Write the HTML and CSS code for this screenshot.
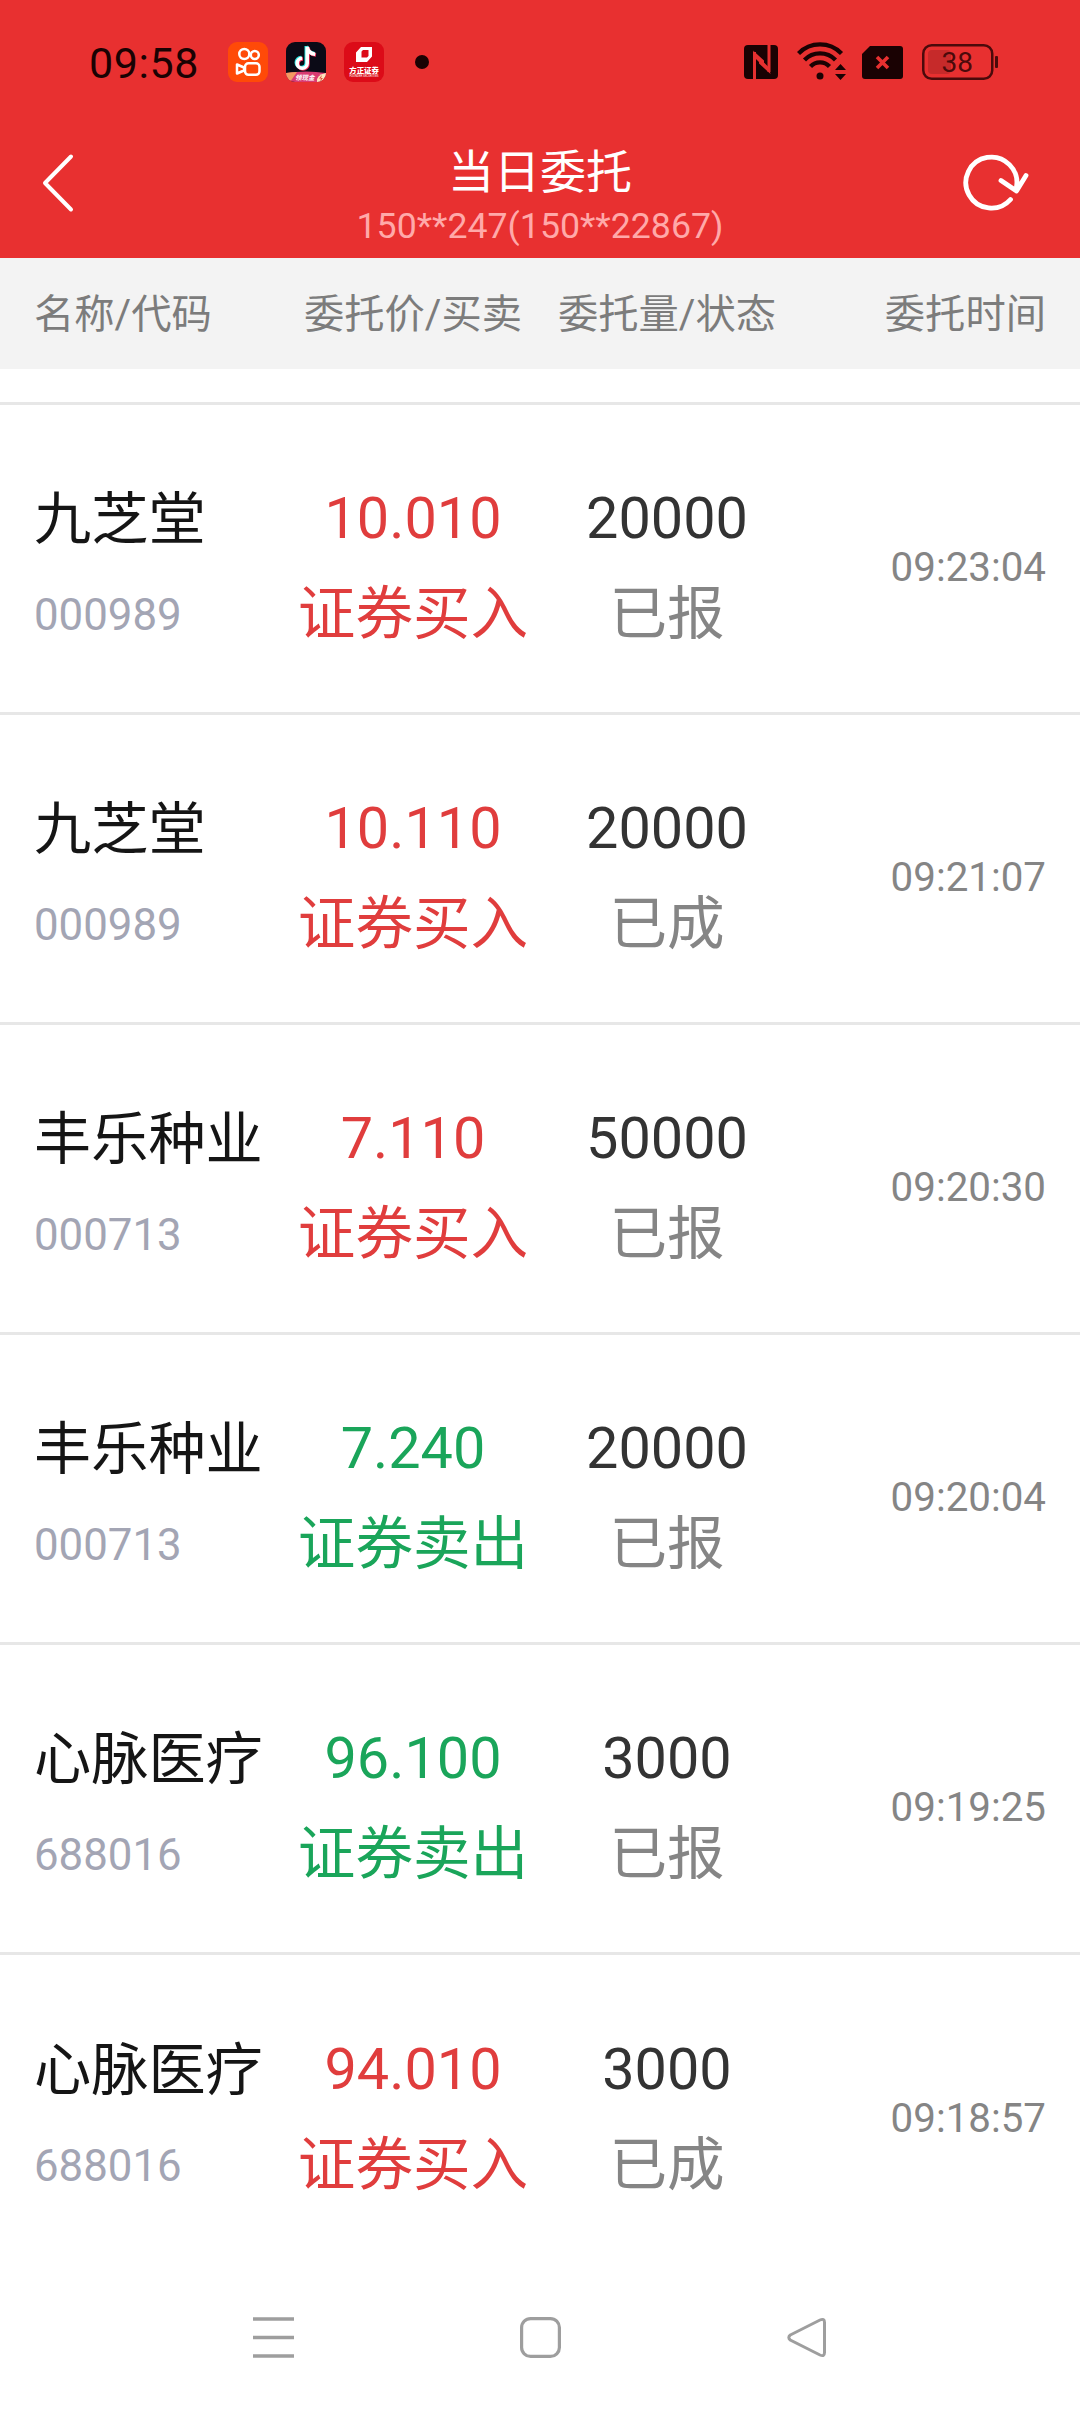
FILE: index.html
```html
<!DOCTYPE html>
<html lang="zh-CN">
<head>
  <meta charset="UTF-8" />
  <title>当日委托</title>
  <link rel="stylesheet" href="styles.css">
</head>
<body>
  <div class="top">
    <div class="status-bar">
      <span class="clock">09:58</span>
      <div class="apps">
        <svg width="40" height="40" viewBox="0 0 40 40">
          <rect width="40" height="40" rx="9" fill="#ff4a08"/>
          <g fill="none" stroke="#fff" stroke-width="2.5" stroke-linejoin="round">
            <circle cx="16.3" cy="12" r="5"/>
            <circle cx="26.8" cy="13" r="4"/>
            <rect x="17" y="21.3" width="14.5" height="11.5" rx="3.5"/>
            <path d="M9 22.5v9l7-3v-3z"/>
          </g>
        </svg>
        <svg width="40" height="40" viewBox="0 0 40 40">
          <clipPath id="round"><rect width="40" height="40" rx="9"/></clipPath>
          <g clip-path="url(#round)">
            <rect width="40" height="40" fill="#0b0a16"/>
            <g fill="none" stroke-width="3.6">
              <path d="M20.3 4v16.500a5 5 0 1 1-5-5M20.300 4c.5 4.500 3.500 7 8 7.500" stroke="#25e5e0"/>
              <path d="M22 5.500v16.500a5 5 0 1 1-5-5M22 5.500c.5 4.500 3.500 7 8 7.500" stroke="#f52b58"/>
              <path d="M21.200 4.700v16.500a5 5 0 1 1-5-5M21.200 4.700c.5 4.500 3.500 7 8 7.500" stroke="#fff"/>
            </g>
            <path d="M0 31q20-3 40 0v9H0z" fill="#d93b72"/>
            <path d="M0 31q6-1 11-1L4 40H0z" fill="#f39a62"/>
            <path d="M31 40q-1-7 9-9v4q-2 4-4 5z" fill="#ffe6bd"/>
            <path d="M36 33l-3 3.500h2l-1 3 3-3.500h-2z" fill="#e0503c"/>
            <text class="badge-text" x="9" y="38">领现金</text>
          </g>
        </svg>
        <svg width="40" height="40" viewBox="0 0 40 40">
          <rect width="40" height="40" rx="9" fill="#dc0b18"/>
          <path fill="#fff" fill-rule="evenodd" d="M17 5h11v9.500L23 20H12v-9.500zM17.500 9.500v6h5.500l1.500-1.500V8h-5.500z"/>
          <text class="broker-text" x="5.300" y="31" textLength="29.500">方正证券</text>
          <text class="broker-sub" x="5.500" y="35.300" textLength="29">FOUNDER SECURITIES</text>
        </svg>
      </div>
      <span class="dot"></span>
      <div class="signals">
        <svg width="34" height="34" viewBox="0 0 34 34">
          <rect width="34" height="34" rx="4" fill="#1a0203"/>
          <path d="M10.500 35V7M25 -1v28" fill="none" stroke="#e83030" stroke-width="3"/>
          <path d="M9 5.500l11 10v6.500l-9-9zM26.500 29l-11.500-10.500v-6l10 10z" fill="#e83030"/>
        </svg>
        <svg class="wifi" width="50" height="38" viewBox="0 0 50 38">
          <g fill="none" stroke="#1a0203" stroke-width="4.300">
            <path d="M1.500 11.500a30 30 0 0 1 43 0"/>
            <path d="M7.500 18a21.500 21.500 0 0 1 31 0"/>
            <path d="M13.500 24.500a13 13 0 0 1 19 0"/>
          </g>
          <circle cx="23" cy="34" r="3.500" fill="#1a0203"/>
          <path d="M38 28l5.500-6 5.500 6zM38 32l5.500 6 5.500-6z" fill="#1a0203"/>
        </svg>
        <svg class="sim" width="41" height="33" viewBox="0 0 41 33">
          <path d="M8 0h30a3 3 0 0 1 3 3v27a3 3 0 0 1-3 3H3a3 3 0 0 1-3-3V8z" fill="#1a0203"/>
          <path d="M15 11l11 11M26 11L15 22" stroke="#e83030" stroke-width="3.600"/>
        </svg>
        <svg class="battery" width="76" height="36" viewBox="0 0 76 36">
          <rect x="6" y="6" width="23" height="24" rx="4" fill="#c62a2a"/>
          <rect x="1.250" y="1.250" width="69" height="33.500" rx="8.500" fill="none" stroke="#4b0a0b" stroke-width="2.500"/>
          <rect x="73" y="12" width="3" height="12" rx="1" fill="#4b0a0b"/>
          <text class="battery-text" x="35.300" y="28" text-anchor="middle">38</text>
        </svg>
      </div>
    </div>
    <div class="nav">
      <svg class="back" width="34" height="60" viewBox="0 0 34 60">
        <path d="M31 3.500L5 30l26 26.500" fill="none" stroke="#fff" stroke-width="4" stroke-linecap="round" stroke-linejoin="round"/>
      </svg>
      <div class="heading">
        <h1>当日委托</h1>
        <p>150**247(150**22867)</p>
      </div>
      <svg class="refresh" width="68" height="60" viewBox="0 0 68 60">
        <path d="M49.500 47.500A25.500 25.500 0 1 1 55.500 35M40 28.500l15.500 10.500L65 23.500" fill="none" stroke="#fff" stroke-width="4.800" stroke-linecap="round" stroke-linejoin="round"/>
      </svg>
    </div>
  </div>

  <div class="columns grid">
    <span>名称/代码</span>
    <span class="center">委托价/买卖</span>
    <span class="center">委托量/状态</span>
    <span class="right">委托时间</span>
  </div>

  <div class="list">
    <div class="row grid">
      <div><div class="name">九芝堂</div><div class="code">000989</div></div>
      <div class="center buy"><div>10.010</div><div>证券买入</div></div>
      <div class="center"><div class="amount">20000</div><div class="state">已报</div></div>
      <div class="time">09:23:04</div>
    </div>
    <div class="row grid">
      <div><div class="name">九芝堂</div><div class="code">000989</div></div>
      <div class="center buy"><div>10.110</div><div>证券买入</div></div>
      <div class="center"><div class="amount">20000</div><div class="state">已成</div></div>
      <div class="time">09:21:07</div>
    </div>
    <div class="row grid">
      <div><div class="name">丰乐种业</div><div class="code">000713</div></div>
      <div class="center buy"><div>7.110</div><div>证券买入</div></div>
      <div class="center"><div class="amount">50000</div><div class="state">已报</div></div>
      <div class="time">09:20:30</div>
    </div>
    <div class="row grid">
      <div><div class="name">丰乐种业</div><div class="code">000713</div></div>
      <div class="center sell"><div>7.240</div><div>证券卖出</div></div>
      <div class="center"><div class="amount">20000</div><div class="state">已报</div></div>
      <div class="time">09:20:04</div>
    </div>
    <div class="row grid">
      <div><div class="name">心脉医疗</div><div class="code">688016</div></div>
      <div class="center sell"><div>96.100</div><div>证券卖出</div></div>
      <div class="center"><div class="amount">3000</div><div class="state">已报</div></div>
      <div class="time">09:19:25</div>
    </div>
    <div class="row grid">
      <div><div class="name">心脉医疗</div><div class="code">688016</div></div>
      <div class="center buy"><div>94.010</div><div>证券买入</div></div>
      <div class="center"><div class="amount">3000</div><div class="state">已成</div></div>
      <div class="time">09:18:57</div>
    </div>
  </div>

  <div class="system-nav">
    <svg width="41" height="41" viewBox="0 0 41 41">
      <path d="M0 2h41M0 20.500h41M0 39h41" stroke="#9e9e9e" stroke-width="3.400"/>
    </svg>
    <svg width="41" height="41" viewBox="0 0 41 41">
      <rect x="1.600" y="1.600" width="37.800" height="37.800" rx="9" fill="none" stroke="#9e9e9e" stroke-width="3.200"/>
    </svg>
    <svg width="41" height="41" viewBox="0 0 41 41">
      <path d="M3.300 18L33 3q4.500-2 4.500 2.500v30q0 4.500-4.500 2.500L3.300 23q-3-2.500 0-5z" fill="none" stroke="#9e9e9e" stroke-width="3"/>
    </svg>
  </div>
</body>
</html>
```
FILE: styles.css
```css
* {
  box-sizing: border-box;
}
body {
  margin: 0;
  width: 1080px;
  height: 2412px;
  display: flex;
  flex-direction: column;
  overflow: hidden;
  background: #fff;
  font-family: Roboto, "Noto Sans CJK SC", sans-serif;
}
svg {
  display: block;
  flex: none;
}
.top {
  height: 258px;
  background: #e83030;
}
.status-bar {
  height: 124px;
  padding: 0 82px 0 89px;
  display: flex;
  align-items: center;
}
.clock {
  width: 139px;
  padding-top: 1px;
  font-size: 43px;
  letter-spacing: 0.6px;
  color: #1a0203;
}
.apps {
  display: flex;
  gap: 18px;
}
.badge-text {
  font-size: 6.5px;
  font-weight: bold;
  font-style: italic;
  fill: #fff;
}
.broker-text {
  font-size: 7.4px;
  font-weight: 900;
  fill: #fff;
}
.broker-sub {
  font-size: 2.9px;
  fill: #fff;
}
.dot {
  width: 14px;
  height: 14px;
  margin-left: 31px;
  border-radius: 50%;
  background: #1a0203;
}
.signals {
  margin-left: auto;
  display: flex;
  align-items: center;
}
.wifi {
  margin-left: 19px;
  margin-top: -2px;
}
.sim {
  margin-left: 15px;
}
.battery {
  margin-left: 19px;
}
.battery-text {
  font-size: 28px;
  fill: #4b0a0b;
}
.nav {
  height: 134px;
  padding: 0 51px 0 40px;
  display: flex;
  justify-content: space-between;
}
.back {
  margin-top: 29px;
  margin-right: 45px;
}
.refresh {
  margin-top: 28px;
}
.heading {
  padding-top: 18px;
  text-align: center;
  color: #fff;
}
.heading h1 {
  margin: 0;
  font-size: 46px;
  font-weight: 400;
  line-height: 60px;
}
.heading p {
  margin: 3px 0 0;
  font-size: 35.7px;
  line-height: 42px;
  color: #ffa9a9;
}
.grid {
  display: grid;
  grid-template-columns: 1fr 254px 254px 1fr;
  align-items: center;
  padding: 0 34px;
}
.center {
  text-align: center;
}
.right {
  text-align: right;
}
.columns {
  height: 111px;
  padding-bottom: 5px;
  background: #f3f3f3;
  color: #7c7c7c;
  font-size: 40.3px;
  white-space: nowrap;
}
.list {
  flex: 1;
  padding-top: 33px;
}
.row {
  height: 310.2px;
  padding-top: 66px;
  padding-bottom: 49px;
  border-top: 3px solid #e7e7e7;
  font-size: 57.6px;
  line-height: 96px;
  white-space: nowrap;
}
.name {
  padding-top: 1px;
  line-height: 95px;
  font-size: 57.2px;
  color: #151515;
}
.code {
  font-size: 43.8px;
  color: #a3a5b4;
}
.buy {
  color: #e03d3d;
}
.sell {
  color: #1aa55a;
}
.amount {
  color: #333;
}
.state {
  color: #858585;
}
.time {
  padding-top: 2px;
  text-align: right;
  font-size: 40.3px;
  color: #858585;
}
.system-nav {
  height: 150px;
  padding: 0 252px 0 253px;
  display: flex;
  align-items: center;
  justify-content: space-between;
}
```
